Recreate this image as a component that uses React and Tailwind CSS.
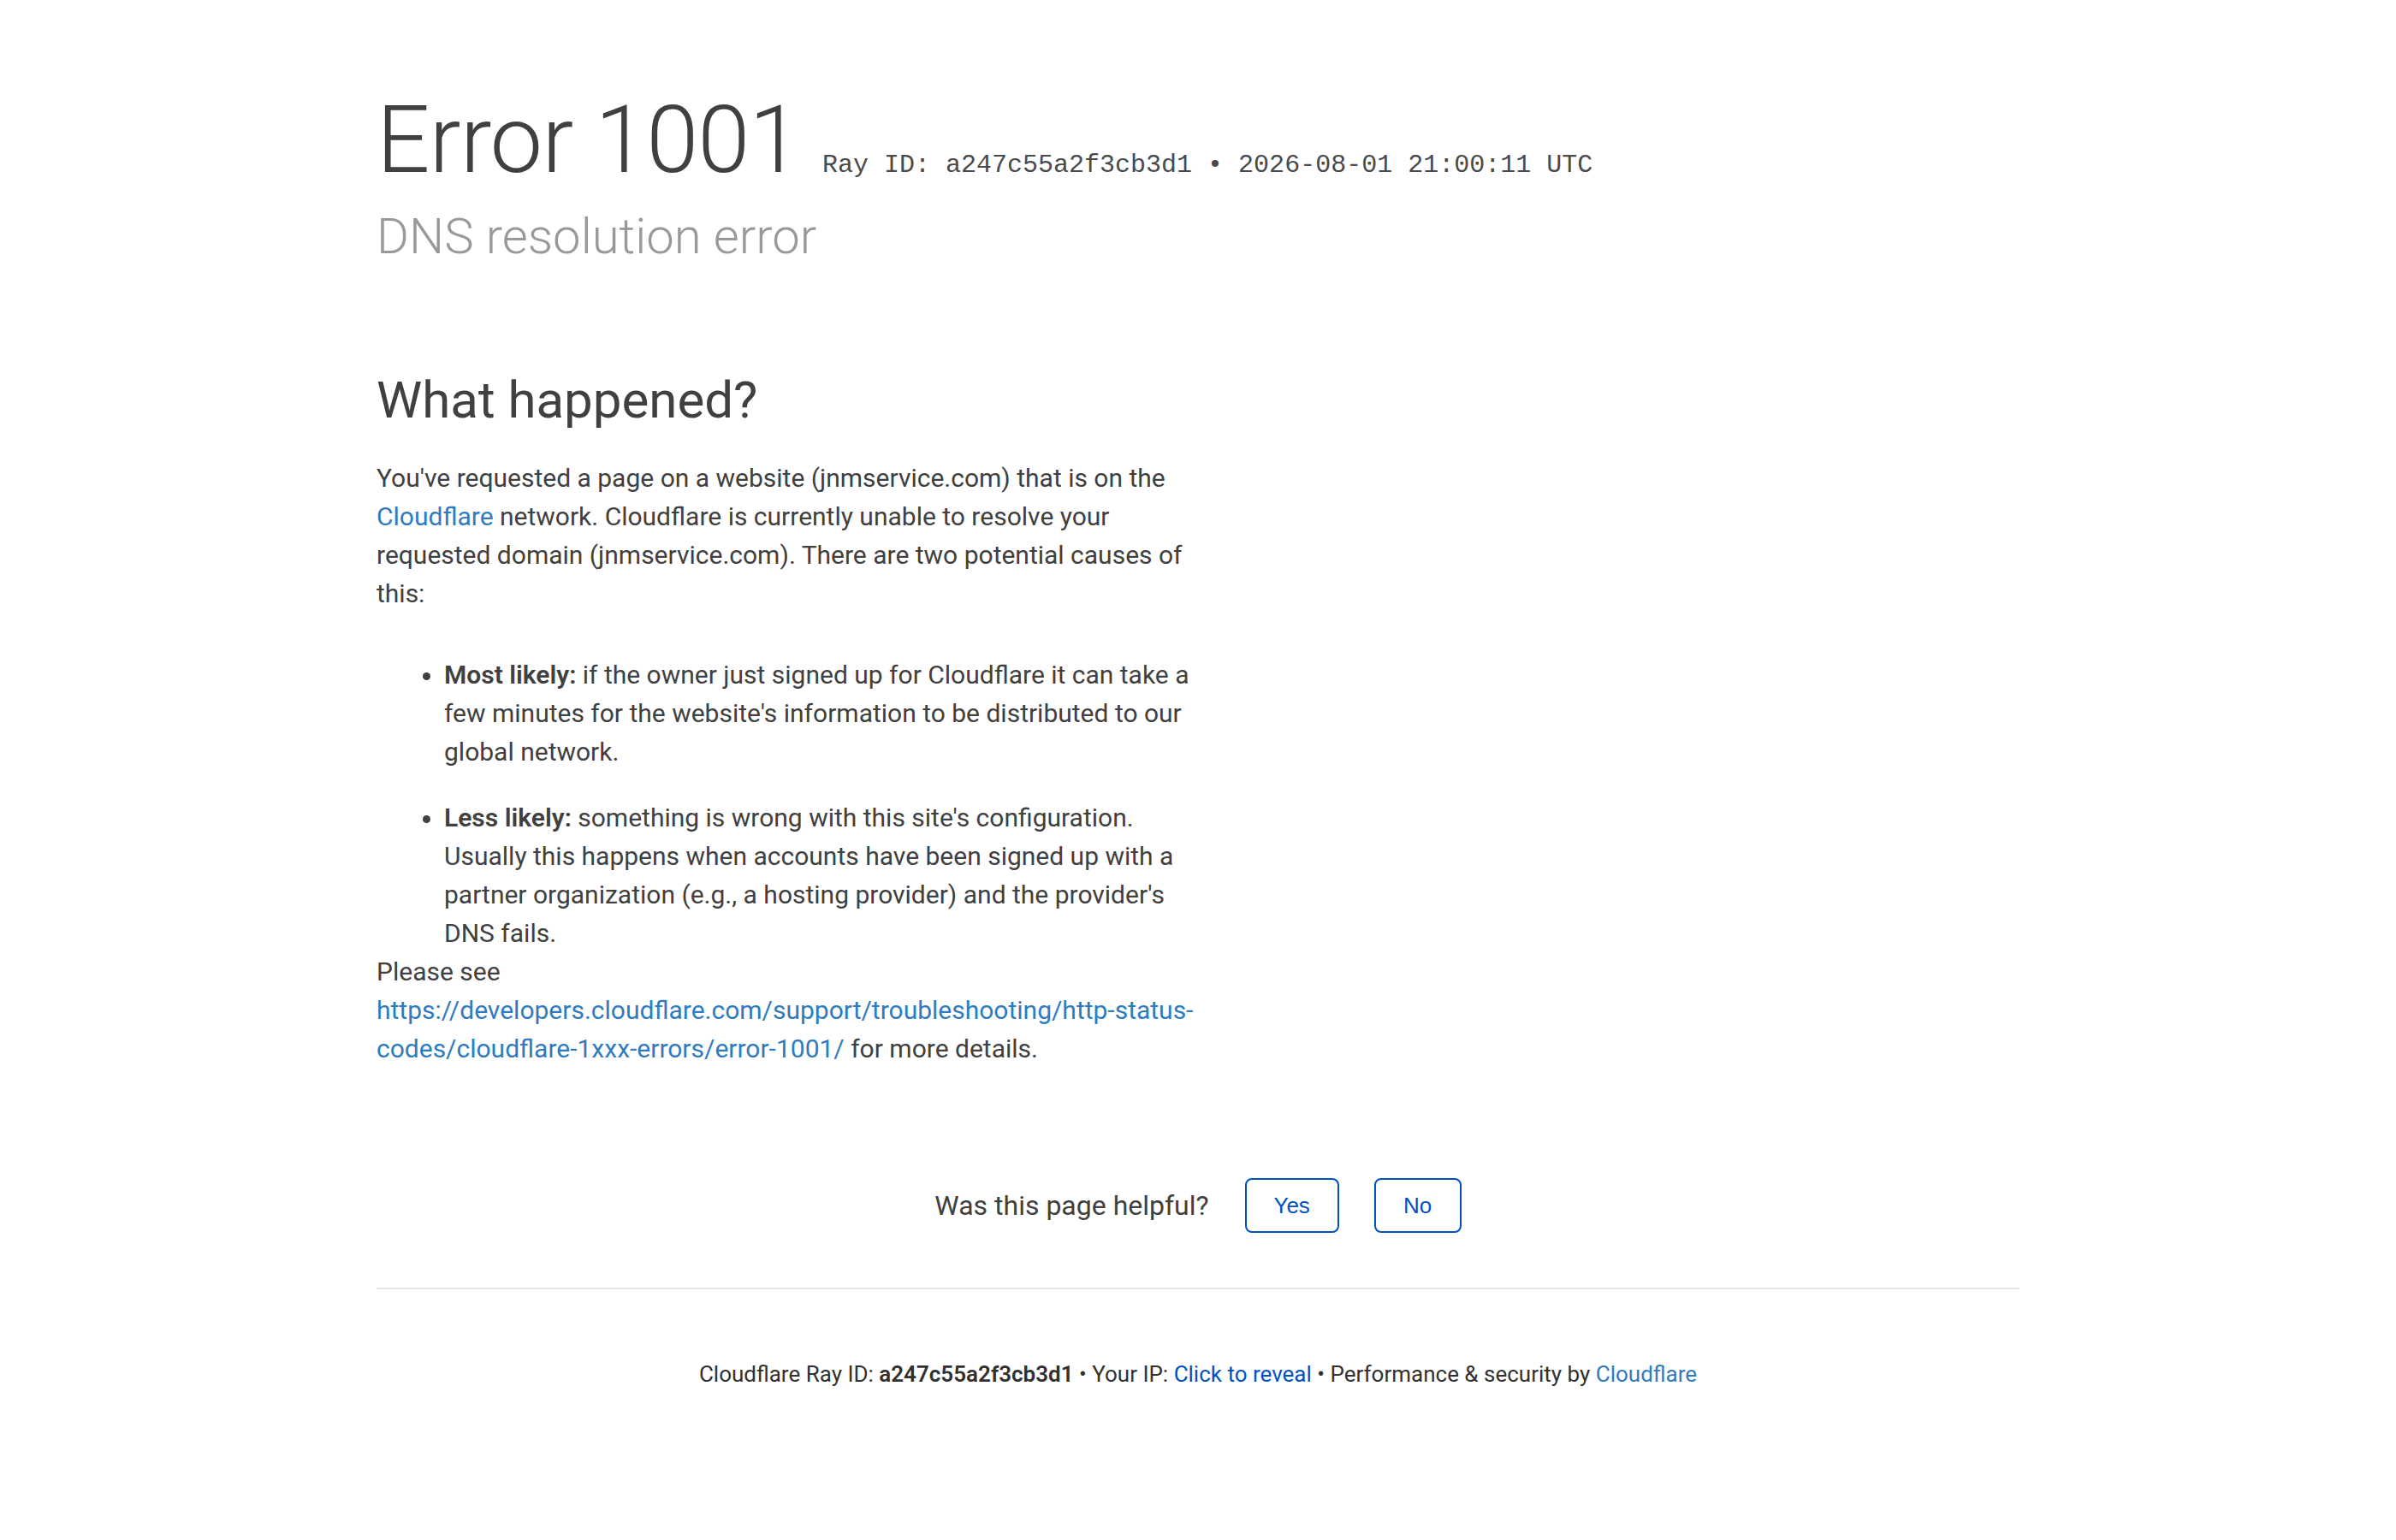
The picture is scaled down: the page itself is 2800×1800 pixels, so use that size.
import React, { useState } from 'react';

const RAY_ID = 'a247c55a2f3cb3d1';

const App = () => {
  const [showIp, setShowIp] = useState(false);
  const [answered, setAnswered] = useState(null);

  return (
    <div className="min-h-screen bg-white text-[#404040] font-['Roboto','Liberation_Sans',sans-serif]">
      <div className="mx-auto w-[1920px] pt-[92px]">
        {/* Headline */}
        <h1 className="text-[110px] font-light leading-[144px] tracking-[-1px] whitespace-nowrap">
          <span>Error</span> <span>1001</span>{' '}
          <small className="font-['Liberation_Mono','Courier_New',monospace] text-[30px] font-normal leading-none tracking-normal text-[#4a4a4a]">
            Ray ID: {RAY_ID} &bull; 2026-08-01 21:00:11 UTC
          </small>
        </h1>
        <h2 className="mt-[4px] text-[58px] font-light leading-[72px] text-[#999999]">
          DNS resolution error
        </h2>

        {/* What happened */}
        <section className="mt-[120px] w-[960px]">
          <h2 className="text-[60px] font-normal leading-[72px]">What happened?</h2>
          <div className="mt-[32px] text-[30px] leading-[45px]">
            <p>
              You've requested a page on a website (jnmservice.com) that is on the{' '}
              <a href="#" className="text-[#2f7bbf]">Cloudflare</a> network. Cloudflare is currently unable to
              resolve your requested domain (jnmservice.com). There are two potential causes of this:
            </p>
            <ul className="mt-[50px] list-disc pl-[79px]">
              <li>
                <strong className="font-semibold">Most likely:</strong> if the owner just signed up for Cloudflare it
                can take a few minutes for the website's information to be distributed to our global network.
              </li>
              <li className="mt-[32px]">
                <strong className="font-semibold">Less likely:</strong> something is wrong with this site's
                configuration. Usually this happens when accounts have been signed up with a partner organization
                (e.g., a hosting provider) and the provider's DNS fails.
              </li>
            </ul>
            <p>
              Please see{' '}
              <a href="#" className="text-[#2f7bbf]">
                https://developers.cloudflare.com/support/troubleshooting/http-status-codes/cloudflare-1xxx-errors/error-1001/
              </a>{' '}
              for more details.
            </p>
          </div>
        </section>

        {/* Feedback */}
        <div className="mt-[129px] flex items-center justify-center">
          {answered ? (
            <span className="text-[32px] leading-[64px]">Thank you for your feedback!</span>
          ) : (
            <>
              <span className="text-[32px]">Was this page helpful?</span>
              <button
                onClick={() => setAnswered('yes')}
                className="ml-[42px] h-[64px] w-[110px] rounded-[8px] border-2 border-[#0051c3] bg-white font-['Liberation_Sans',Arial,sans-serif] text-[26px] text-[#0051c3]"
              >
                Yes
              </button>
              <button
                onClick={() => setAnswered('no')}
                className="ml-[41px] h-[64px] w-[102px] rounded-[8px] border-2 border-[#0051c3] bg-white font-['Liberation_Sans',Arial,sans-serif] text-[26px] text-[#0051c3]"
              >
                No
              </button>
            </>
          )}
        </div>

        {/* Footer */}
        <div className="mt-[64px] border-t-2 border-[#e5e5e5] pt-[80px] text-center text-[26px] leading-[39px] text-[#313131]">
          Cloudflare Ray ID: <strong className="font-semibold">{RAY_ID}</strong> &bull; Your IP:{' '}
          {showIp ? (
            <span>203.0.113.24</span>
          ) : (
            <button onClick={() => setShowIp(true)} className="text-[#0051c3]">
              Click to reveal
            </button>
          )}{' '}
          &bull; Performance &amp; security by <a href="#" className="text-[#2f7bbf]">Cloudflare</a>
        </div>
      </div>
    </div>
  );
};

export default App;
